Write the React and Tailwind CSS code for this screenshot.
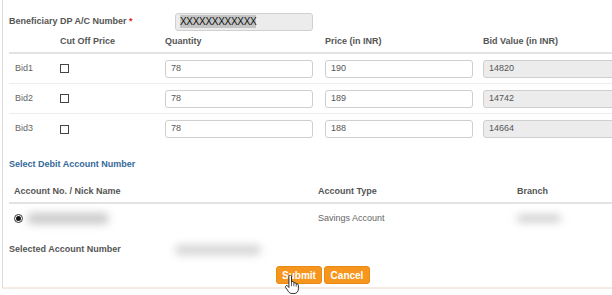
import React from 'react';

// Bid rows shown in the IPO bid form
const bids = [
  { label: 'Bid1', qty: '78', price: '190', value: '14820' },
  { label: 'Bid2', qty: '78', price: '189', value: '14742' },
  { label: 'Bid3', qty: '78', price: '188', value: '14664' },
];

const Checkbox = () => (
  <span className="block w-[9px] h-[9px] border border-[#444] bg-white" />
);

const Radio = () => (
  <span className="flex items-center justify-center w-[9px] h-[9px] rounded-full border border-[#333] bg-white">
    <span className="block w-[5px] h-[5px] rounded-full bg-[#111]" />
  </span>
);

const Field = ({ value, readOnly }) => (
  <div
    className={`w-[148px] h-[18px] flex items-center px-[5px] border border-[#cfcfcf] rounded-[3px] text-[9px] text-[#555] ${
      readOnly ? 'bg-[#ececec]' : 'bg-white'
    }`}
  >
    {value}
  </div>
);

const Blur = ({ className }) => (
  <div className={`bg-[#c9c9c9] rounded-full blur-[4px] ${className}`} />
);

const HandCursor = () => (
  <svg
    className="absolute left-[284px] top-[275px]"
    width="15"
    height="19"
    viewBox="0 0 16 22"
  >
    <path
      d="M5 1.5c0-.8.6-1.5 1.5-1.5S8 .7 8 1.5V8c.3-.4.8-.6 1.3-.6.8 0 1.4.6 1.4 1.4v.7c.3-.4.8-.6 1.3-.6.8 0 1.4.6 1.4 1.4v.6c.3-.3.7-.5 1.2-.5.8 0 1.4.6 1.4 1.4V16c0 3-2 5.5-5 5.5H8.5c-1.6 0-2.9-.8-3.8-2L1.3 14.6c-.5-.7-.4-1.6.3-2.1.7-.5 1.6-.3 2.1.3L5 14.5Z"
      fill="#fff"
      stroke="#111"
      strokeWidth="1"
      strokeLinejoin="round"
    />
    <path d="M8 8v5M10.7 9.5v3.5M13.4 11v2.5" stroke="#111" strokeWidth="0.8" />
  </svg>
);

export default function App() {
  return (
    <div className="relative w-[612px] h-[295px] overflow-hidden bg-white font-['Liberation_Sans',Arial,sans-serif]">
      <div className="ml-[2px] h-[289px] border-l border-b-2 border-l-[#dcdcdc] border-b-[#f4ece2] pl-[6px]">
        {/* Beneficiary */}
        <div className="flex items-center pt-[12px] h-[31px]">
          <div className="w-[166px] text-[9px] font-bold text-[#555]">
            Beneficiary DP A/C Number <span className="text-[#e0202a]">*</span>
          </div>
          <div className="w-[138px] h-[18px] flex items-center px-[4px] border border-[#d0d0d0] rounded-[3px] bg-[#ececec]">
            <span className="bg-[#c4c4c4] text-[10px] text-[#111] leading-[13px] tracking-[-0.3px]">
              XXXXXXXXXXXX
            </span>
          </div>
        </div>

        {/* Bid table */}
        <div className="grid grid-cols-[51px_105px_160px_158px_1fr] items-center h-[23px] border-b-2 border-[#e3e3e3] text-[9px] font-bold text-[#555]">
          <div />
          <div>Cut Off Price</div>
          <div>Quantity</div>
          <div>Price (in INR)</div>
          <div className="whitespace-nowrap">Bid Value (in INR)</div>
        </div>
        {bids.map((b, i) => (
          <div
            key={b.label}
            className={`grid grid-cols-[51px_105px_160px_158px_1fr] items-center h-[30px] ${
              i < bids.length - 1 ? 'border-b border-[#ececec]' : ''
            }`}
          >
            <div className="pl-[6px] text-[9px] text-[#666]">{b.label}</div>
            <div>
              <Checkbox />
            </div>
            <Field value={b.qty} />
            <Field value={b.price} />
            <Field value={b.value} readOnly />
          </div>
        ))}

        {/* Debit account */}
        <div className="pt-[14px] text-[9px] leading-[12px] font-bold text-[#35699a]">
          Select Debit Account Number
        </div>
        <div className="mt-[11px] grid grid-cols-[309px_199px_1fr] items-center h-[23px] border-b-2 border-[#e3e3e3] text-[9px] font-bold text-[#555]">
          <div className="pl-[5px]">Account No. / Nick Name</div>
          <div>Account Type</div>
          <div>Branch</div>
        </div>
        <div className="grid grid-cols-[309px_199px_1fr] items-center h-[29px] text-[9px] text-[#666]">
          <div className="flex items-center pl-[5px] gap-[4px]">
            <Radio />
            <Blur className="w-[82px] h-[11px]" />
          </div>
          <div>Savings Account</div>
          <Blur className="w-[44px] h-[7px] bg-[#bdbdbd]" />
        </div>
        <div className="flex items-center h-[22px] mt-[6px]">
          <div className="w-[166px] text-[9px] font-bold text-[#555]">Selected Account Number</div>
          <Blur className="w-[86px] h-[10px] bg-[#d4d4d4]" />
        </div>

        {/* Actions */}
        <div className="flex gap-[2px] pl-[267px] mt-[5px]">
          <button className="w-[46px] h-[18px] rounded-[3px] border border-[#e88a14] bg-[#f7961e] text-white text-[10px] font-bold">
            Submit
          </button>
          <button className="w-[46px] h-[18px] rounded-[3px] border border-[#e88a14] bg-[#f7961e] text-white text-[10px] font-bold">
            Cancel
          </button>
        </div>
      </div>
      <HandCursor />
    </div>
  );
}
